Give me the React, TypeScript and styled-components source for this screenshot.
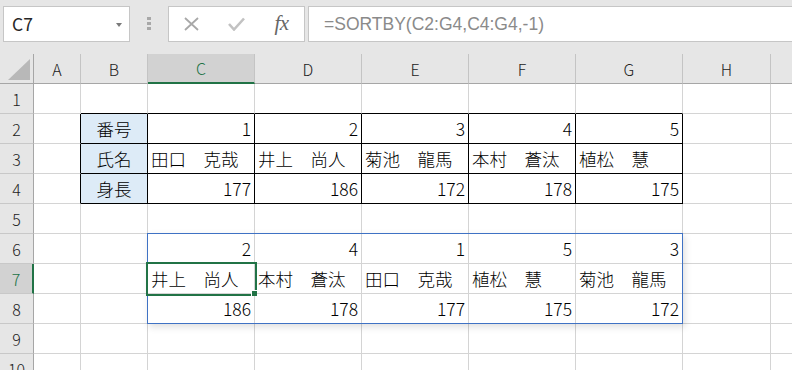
import React from "react";
import styled, { createGlobalStyle, css } from "styled-components";

const GlobalStyle = createGlobalStyle`
  html, body {
    margin: 0;
    padding: 0;
    background: #ffffff;
    overflow: hidden;
  }
  body {
    font-family: "Noto Sans CJK JP", "Noto Sans", sans-serif;
  }
`;

type Align = "left" | "right" | "center";

interface CellData {
  v: string;
  align?: Align;
  fill?: string;
}

// the last column (I) only peeks in at the right edge, its letter is off screen
const COLS = ["A", "B", "C", "D", "E", "F", "G", "H", ""];
const ROW_COUNT = 10;

const LABEL_FILL = "#ddebf7";
const GRID = "#d4d4d4";
const INK = "#000000";

// B2:G4 is the source table, C6:G8 is the SORTBY spill result
const TABLE = { r1: 2, r2: 4, c1: 2, c2: 7 };
const SELECTED = { r: 7, c: 3 };

const DATA: Record<string, CellData> = {
  B2: { v: "番号", align: "center", fill: LABEL_FILL },
  B3: { v: "氏名", align: "center", fill: LABEL_FILL },
  B4: { v: "身長", align: "center", fill: LABEL_FILL },
  C2: { v: "1", align: "right" },
  D2: { v: "2", align: "right" },
  E2: { v: "3", align: "right" },
  F2: { v: "4", align: "right" },
  G2: { v: "5", align: "right" },
  C3: { v: "田口　克哉" },
  D3: { v: "井上　尚人" },
  E3: { v: "菊池　龍馬" },
  F3: { v: "本村　蒼汰" },
  G3: { v: "植松　慧" },
  C4: { v: "177", align: "right" },
  D4: { v: "186", align: "right" },
  E4: { v: "172", align: "right" },
  F4: { v: "178", align: "right" },
  G4: { v: "175", align: "right" },
  C6: { v: "2", align: "right" },
  D6: { v: "4", align: "right" },
  E6: { v: "1", align: "right" },
  F6: { v: "5", align: "right" },
  G6: { v: "3", align: "right" },
  C7: { v: "井上　尚人" },
  D7: { v: "本村　蒼汰" },
  E7: { v: "田口　克哉" },
  F7: { v: "植松　慧" },
  G7: { v: "菊池　龍馬" },
  C8: { v: "186", align: "right" },
  D8: { v: "178", align: "right" },
  E8: { v: "177", align: "right" },
  F8: { v: "175", align: "right" },
  G8: { v: "172", align: "right" },
};

const inTable = (r: number, c: number) =>
  r >= TABLE.r1 && r <= TABLE.r2 && c >= TABLE.c1 && c <= TABLE.c2;

const App = () => {
  const rows = Array.from({ length: ROW_COUNT }, (_, i) => i + 1);

  return (
    <Page>
      <GlobalStyle />
      <Toolbar>
        <NameBox>
          <span>C7</span>
          <DropArrow />
        </NameBox>
        <Grip>
          <i />
          <i />
          <i />
        </Grip>
        <FxBox>
          <IconSlot>
            <svg width="15" height="14" viewBox="0 0 15 14">
              <path d="M1 1 L14 13 M14 1 L1 13" stroke="#a8a8a8" strokeWidth="1.8" fill="none" />
            </svg>
          </IconSlot>
          <IconSlot>
            <svg width="17" height="14" viewBox="0 0 17 14">
              <path d="M1 7 L6 12.5 L16 1.5" stroke="#c2c2c2" strokeWidth="2.6" fill="none" />
            </svg>
          </IconSlot>
          <IconSlot>
            <FxText>fx</FxText>
          </IconSlot>
        </FxBox>
        <FormulaBox>=SORTBY(C2:G4,C4:G4,-1)</FormulaBox>
      </Toolbar>

      <Sheet>
        <Corner>
          <SelectAll />
        </Corner>
        {COLS.map((col, i) => (
          <ColHead key={i} $active={i + 1 === SELECTED.c}>
            {col}
          </ColHead>
        ))}

        {rows.map((r) => (
          <React.Fragment key={r}>
            <RowHead $active={r === SELECTED.r}>{r}</RowHead>
            {COLS.map((col, i) => {
              const c = i + 1;
              const cell = col ? DATA[`${col}${r}`] : undefined;
              const right = inTable(r, c) || inTable(r, c + 1) ? INK : GRID;
              const bottom = inTable(r, c) || inTable(r + 1, c) ? INK : GRID;
              return (
                <Cell
                  key={i}
                  $align={cell?.align ?? "left"}
                  $fill={cell?.fill}
                  $right={right}
                  $bottom={bottom}
                  $selected={r === SELECTED.r && c === SELECTED.c}
                >
                  {cell?.v}
                </Cell>
              );
            })}
          </React.Fragment>
        ))}

        <SpillFrame />
      </Sheet>
    </Page>
  );
};

export default App;

const Page = styled.div`
  width: 792px;
  height: 370px;
  overflow: hidden;
  background: #ffffff;
`;

const Toolbar = styled.div`
  display: flex;
  align-items: flex-start;
  box-sizing: border-box;
  height: 54px;
  padding: 6px 0 0 3px;
  background: #e6e6e6;
`;

const NameBox = styled.div`
  display: flex;
  align-items: center;
  justify-content: space-between;
  box-sizing: border-box;
  width: 127px;
  height: 36px;
  padding: 0 7px 0 8px;
  background: #ffffff;
  border: 1px solid #c6c6c6;
  color: #262626;
  font-size: 17.5px;
  line-height: 1;
`;

const DropArrow = styled.span`
  width: 0;
  height: 0;
  border-left: 3.5px solid transparent;
  border-right: 3.5px solid transparent;
  border-top: 4px solid #7a7a7a;
  margin-top: 1px;
`;

const Grip = styled.div`
  display: flex;
  flex-direction: column;
  gap: 2px;
  margin: 11px 0 0 17px;

  i {
    display: block;
    width: 4px;
    height: 3px;
    background: #a8a8a8;
  }
`;

const FxBox = styled.div`
  display: flex;
  box-sizing: border-box;
  width: 137px;
  height: 36px;
  margin-left: 17px;
  background: #ffffff;
  border: 1px solid #c6c6c6;
`;

const IconSlot = styled.div`
  display: flex;
  align-items: center;
  justify-content: center;
  width: 45px;
`;

const FxText = styled.span`
  font-family: "Liberation Serif", "DejaVu Serif", serif;
  font-style: italic;
  font-size: 21px;
  color: #666666;
  letter-spacing: -0.5px;
  margin-top: -2px;
`;

const FormulaBox = styled.div`
  flex: 1;
  display: flex;
  align-items: center;
  box-sizing: border-box;
  height: 36px;
  margin-left: 3px;
  padding-left: 15px;
  background: #ffffff;
  border: 1px solid #c6c6c6;
  border-right: none;
  color: #8a8a8a;
  font-family: "Liberation Sans", Arial, sans-serif;
  font-size: 17.5px;
`;

const Sheet = styled.div`
  position: relative;
  display: grid;
  grid-template-columns: 34px 47px 67px repeat(5, 107px) 88px 64px;
  grid-auto-rows: 30px;
  background: #ffffff;
`;

const HeadBase = css`
  display: flex;
  align-items: center;
  justify-content: center;
  box-sizing: border-box;
  font-size: 16px;
  font-weight: 300;
  line-height: 1;
`;

const Corner = styled.div`
  ${HeadBase};
  align-items: flex-end;
  justify-content: flex-end;
  padding: 0 3px 3px 0;
  background: #e6e6e6;
  border-right: 1px solid #a6a6a6;
  border-bottom: 1px solid #a6a6a6;
`;

const SelectAll = styled.div`
  width: 22px;
  height: 21px;
  background: #b8b8b8;
  clip-path: polygon(100% 0, 100% 100%, 0 100%);
`;

const ColHead = styled.div<{ $active?: boolean }>`
  ${HeadBase};
  background: ${(p) => (p.$active ? "#d2d2d2" : "#e6e6e6")};
  color: ${(p) => (p.$active ? "#217346" : "#222222")};
  border-right: 1px solid #c4c4c4;
  border-bottom: ${(p) => (p.$active ? "2px solid #217346" : "1px solid #a6a6a6")};
`;

const RowHead = styled.div<{ $active?: boolean }>`
  ${HeadBase};
  background: ${(p) => (p.$active ? "#d2d2d2" : "#e6e6e6")};
  color: ${(p) => (p.$active ? "#217346" : "#222222")};
  border-right: ${(p) => (p.$active ? "2px solid #217346" : "1px solid #a6a6a6")};
  border-bottom: 1px solid #c8c8c8;
`;

const Cell = styled.div<{
  $align: Align;
  $fill?: string;
  $right: string;
  $bottom: string;
  $selected?: boolean;
}>`
  display: flex;
  align-items: center;
  justify-content: ${(p) =>
    p.$align === "right" ? "flex-end" : p.$align === "center" ? "center" : "flex-start"};
  box-sizing: border-box;
  padding: 0 3px 0 3px;
  background: ${(p) => p.$fill ?? "#ffffff"};
  border-right: 1px solid ${(p) => p.$right};
  border-bottom: 1px solid ${(p) => p.$bottom};
  color: #000000;
  font-size: 17.5px;
  font-weight: 300;
  line-height: 1;
  white-space: nowrap;

  ${(p) =>
    p.$selected &&
    css`
      position: relative;
      z-index: 3;
      outline: 2px solid #217346;

      &::after {
        content: "";
        position: absolute;
        right: -3px;
        bottom: -3px;
        width: 5px;
        height: 5px;
        background: #217346;
        border-left: 1px solid #ffffff;
        border-top: 1px solid #ffffff;
      }
    `}
`;

/* spill range outline, sits over the C6:G8 cells */
const SpillFrame = styled.div`
  position: absolute;
  grid-column: 4 / 9;
  grid-row: 7 / 10;
  top: -1px;
  left: -1px;
  right: 0;
  bottom: 0;
  border: 1px solid #3f72c4;
  box-shadow: 2px 3px 7px rgba(0, 0, 0, 0.13);
  pointer-events: none;
  z-index: 2;
`;
